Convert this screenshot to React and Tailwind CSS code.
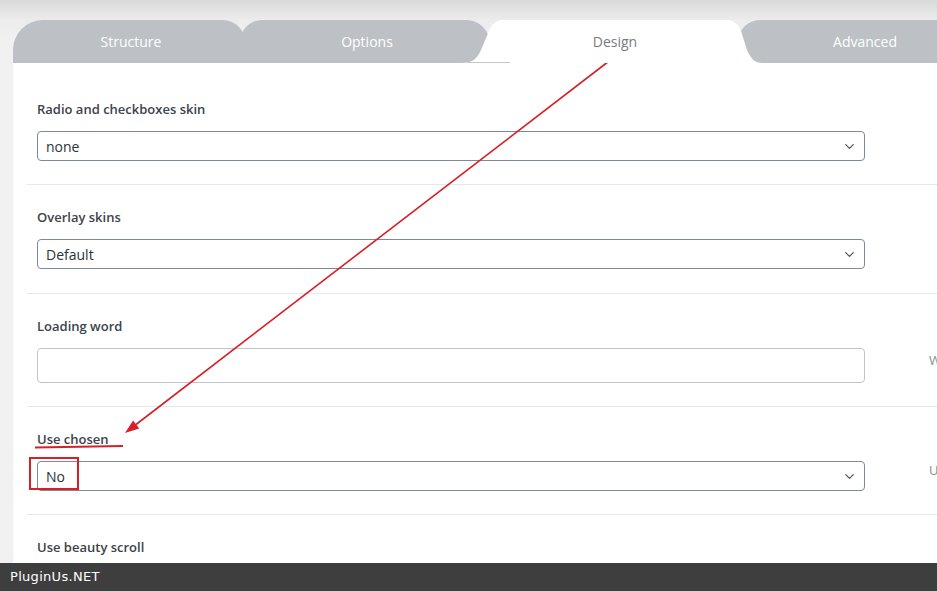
import { ChevronDown } from 'lucide-react';

const font = { fontFamily: '"Open Sans", "Noto Sans", Arial, sans-serif' };

function Select({ value }) {
  return (
    <div className="h-[30px] w-[828px] rounded-[4px] border border-[#7e8993] bg-white flex items-center justify-between pl-[8px] pr-[7px] text-[14px] text-[#2c3338]">
      <span>{value}</span>
      <ChevronDown className="w-[15px] h-[15px] text-[#50575e]" strokeWidth={2} />
    </div>
  );
}

function Row({ label, children, desc, last, pb = 'pb-[23px]' }) {
  return (
    <div className={`pl-[10px] pt-[22px] ${last ? '' : `${pb} border-b border-[#e4e9ef]`}`}>
      <div className="text-[13px] leading-[20px] font-semibold text-[#3c434a] mb-[12px]">{label}</div>
      <div className="flex items-center">
        <div className="w-[828px] shrink-0">{children}</div>
        {desc && <div className="relative top-[-5px] ml-[64px] whitespace-nowrap text-[13px] text-[#8a8d91]">{desc}</div>}
      </div>
    </div>
  );
}

export default function App() {
  return (
    <div
      className="relative w-[937px] h-[591px] overflow-hidden flex flex-col bg-[linear-gradient(#d9d9d9,#ececec_20px,#f1f1f1_40px)]"
      style={font}
    >
      {/* tabs */}
      <div className="flex pl-[13px] pt-[20px] h-[63px] shrink-0">
        <div className="relative w-[232px] h-[43px] shrink-0 bg-[#bdc1c6] rounded-tl-[30px] rounded-tr-[22px] flex items-center justify-center pl-[4px] text-[14px] text-white">
          Structure
        </div>
        <div className="relative ml-[-5px] w-[250px] h-[43px] shrink-0 bg-[#bdc1c6] rounded-tl-[22px] rounded-tr-[24px] flex items-center justify-center pl-[4px] text-[14px] text-white">
          Options
        </div>
        <div className="relative z-10 ml-[-28px] w-[300px] h-[43px] shrink-0 flex items-center justify-center pl-[6px] text-[14px] text-[#777b80]">
          <svg className="absolute inset-0" width="300" height="43" viewBox="0 0 300 43">
            <path
              d="M0,43 C10,43 15,39 19,30 L27,11 C30,4 34,0 41,0 H265 C272,0 276,4 279,11 L285,30 C289,39 293,43 300,43 Z"
              fill="#fff"
            />
          </svg>
          <div className="absolute left-[5px] bottom-0 w-[43px] h-px bg-[#c3c6ca]" />
          <span className="relative">Design</span>
        </div>
        <div className="relative ml-[-24px] w-[252px] h-[43px] shrink-0 bg-[#bdc1c6] rounded-tl-[22px] flex items-center justify-center pl-[2px] text-[14px] text-white">
          Advanced
        </div>
      </div>

      {/* panel */}
      <div className="ml-[13px] flex-1 bg-white pt-[14px] overflow-hidden">
        <div className="ml-[14px]">
          <Row label="Radio and checkboxes skin">
            <Select value="none" />
          </Row>
          <Row label="Overlay skins" pb="pb-[24px]">
            <Select value="Default" />
          </Row>
          <Row label="Loading word" desc="Word while searching is going on the site">
            <div className="h-[35px] w-[828px] rounded-[4px] border border-[#c3c4c7] bg-white" />
          </Row>
          <Row label="Use chosen" desc="Use chosen javascript library on the front">
            <Select value="No" />
          </Row>
          <Row label="Use beauty scroll" last>
            <Select value="No" />
          </Row>
        </div>
      </div>

      {/* footer */}
      <div
        className="h-[28px] shrink-0 bg-[#3e3e3e] text-white text-[13px] flex items-center pl-[10px] tracking-[0.3px]"
        style={{ fontFamily: '"DejaVu Sans", "Noto Sans", sans-serif' }}
      >
        PluginUs.NET
      </div>

      {/* red annotations */}
      <svg className="absolute inset-0 pointer-events-none" width="937" height="591" viewBox="0 0 937 591">
        <line x1="613" y1="58" x2="136" y2="424.5" stroke="#d61f26" strokeWidth="1.6" />
        <polygon points="125,433 139.2,428.5 133.1,420.5" fill="#d61f26" />
        <path d="M35,447.5 L123,446" stroke="#d61f26" strokeWidth="2" fill="none" />
        <rect x="30" y="458" width="48" height="31" stroke="#d61f26" strokeWidth="2" fill="none" />
      </svg>
    </div>
  );
}
